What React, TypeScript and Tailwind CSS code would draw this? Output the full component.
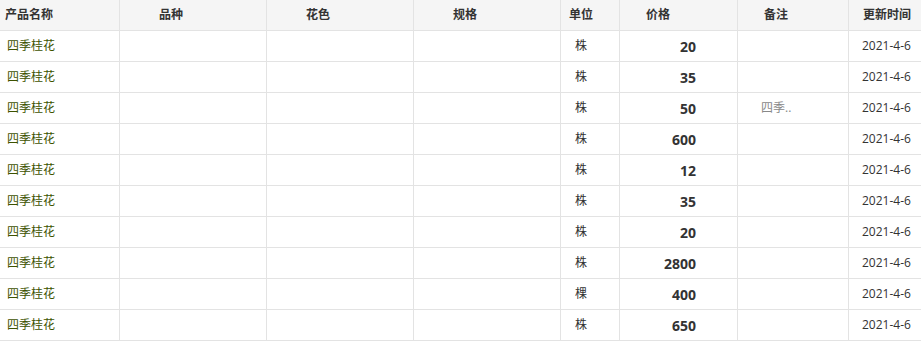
type Row = {
  nombre: string;
  unidad: string;
  precio: string;
  nota?: string;
  fecha: string;
};

const ROWS: Row[] = [
  { nombre: "四季桂花", unidad: "株", precio: "20", fecha: "2021-4-6" },
  { nombre: "四季桂花", unidad: "株", precio: "35", fecha: "2021-4-6" },
  { nombre: "四季桂花", unidad: "株", precio: "50", nota: "四季..", fecha: "2021-4-6" },
  { nombre: "四季桂花", unidad: "株", precio: "600", fecha: "2021-4-6" },
  { nombre: "四季桂花", unidad: "株", precio: "12", fecha: "2021-4-6" },
  { nombre: "四季桂花", unidad: "株", precio: "35", fecha: "2021-4-6" },
  { nombre: "四季桂花", unidad: "株", precio: "20", fecha: "2021-4-6" },
  { nombre: "四季桂花", unidad: "株", precio: "2800", fecha: "2021-4-6" },
  { nombre: "四季桂花", unidad: "棵", precio: "400", fecha: "2021-4-6" },
  { nombre: "四季桂花", unidad: "株", precio: "650", fecha: "2021-4-6" },
];

const COLS =
  "grid grid-cols-[119px_147px_147px_147px_59px_118px_111px_73px] border-b border-[#e3e3e3]";

const cell = "flex items-center border-l border-[#e3e3e3] whitespace-nowrap";

export default function App() {
  return (
    <div
      className="w-[921px] bg-white text-[12px] text-[#333]"
      style={{ fontFamily: '"Open Sans", "Noto Sans CJK SC", sans-serif' }}
    >
      {/* cabecera */}
      <div className={`${COLS} h-[31px] bg-[#f5f5f5] font-bold`}>
        <div className="flex items-center whitespace-nowrap pl-[5px]">产品名称</div>
        <div className={`${cell} pl-[39px]`}>品种</div>
        <div className={`${cell} pl-[39px]`}>花色</div>
        <div className={`${cell} pl-[39px]`}>规格</div>
        <div className={`${cell} pl-[8px]`}>单位</div>
        <div className={`${cell} pl-[26px]`}>价格</div>
        <div className={`${cell} pl-[26px]`}>备注</div>
        <div className={`${cell} pl-[14px]`}>更新时间</div>
      </div>

      {ROWS.map((r, i) => (
        <div key={i} className={`${COLS} h-[31px]`}>
          <div className="flex items-center whitespace-nowrap pl-[7px] text-[#3d5200]">
            {r.nombre}
          </div>
          <div className={cell} />
          <div className={cell} />
          <div className={cell} />
          <div className={`${cell} pl-[14px]`}>{r.unidad}</div>
          <div className={`${cell} justify-end pr-[41px] text-[14px] font-bold`}>
            {r.precio}
          </div>
          <div className={`${cell} pl-[23px] text-[#888]`}>{r.nota ?? ""}</div>
          <div className={`${cell} pl-[13px]`}>{r.fecha}</div>
        </div>
      ))}
    </div>
  );
}
